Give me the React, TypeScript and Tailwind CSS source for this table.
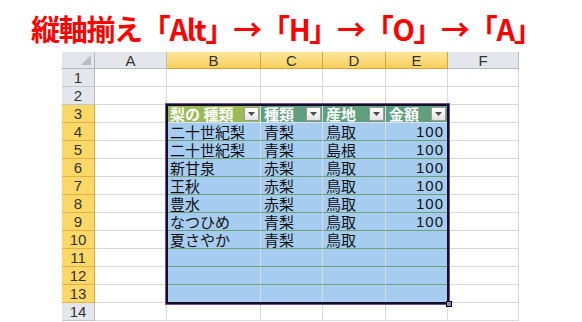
const COLS = ["A", "B", "C", "D", "E", "F"];

const HEADERS = [
  { label: "梨の 種類", bg: "bg-[#9bbb59]" },
  { label: "種類", bg: "bg-[#5f9f7e]" },
  { label: "産地", bg: "bg-[#5f9f7e]" },
  { label: "金額", bg: "bg-[#5f9f7e]" },
];

const ROWS: string[][] = [
  ["二十世紀梨", "青梨", "鳥取", "100"],
  ["二十世紀梨", "青梨", "島根", "100"],
  ["新甘泉", "赤梨", "鳥取", "100"],
  ["王秋", "赤梨", "鳥取", "100"],
  ["豊水", "赤梨", "鳥取", "100"],
  ["なつひめ", "青梨", "鳥取", "100"],
  ["夏さやか", "青梨", "鳥取", ""],
  ["", "", "", ""],
  ["", "", "", ""],
  ["", "", "", ""],
];

// rows 3..13 and columns B..E belong to the table
const inTable = (row: number, col: number) => row >= 3 && row <= 13 && col >= 1 && col <= 4;
const selectedCol = (col: number) => col >= 1 && col <= 4;
const selectedRow = (row: number) => row >= 3 && row <= 13;

function FilterButton() {
  return (
    <span className="ml-auto mr-[1px] flex h-[14px] w-[15px] shrink-0 items-center justify-center border border-[#9a9a9a] bg-gradient-to-b from-white to-[#e3e3e3]">
      <svg width="7" height="4" viewBox="0 0 7 4">
        <path d="M0 0H7L3.5 4Z" fill="#4d4d4d" />
      </svg>
    </span>
  );
}

function PearTable() {
  return (
    <div className="relative col-start-3 col-span-4 row-start-4 row-span-11">
      <div className="grid h-full grid-cols-[94px_62px_63px_62px] grid-rows-[repeat(11,18px)] font-['Noto_Sans_CJK_JP',sans-serif]">
        {HEADERS.map((h) => (
          <div
            key={h.label}
            className={`flex items-center border-b border-r border-[#d9e2ea] pl-[3px] text-[15px] font-bold leading-[17px] text-white ${h.bg}`}
          >
            <span className="whitespace-pre">{h.label}</span>
            <FilterButton />
          </div>
        ))}
        {ROWS.map((r, i) =>
          r.map((v, j) => (
            <div
              key={`${i}-${j}`}
              className={`flex items-center border-b border-r border-b-[#6c9f7b] border-r-[#d4dde8] bg-[#a6cdf0] px-[3px] text-[15px] leading-[16px] text-[#111] ${
                j === 3 ? "justify-end font-['Liberation_Sans',sans-serif] tracking-[1px]" : ""
              }`}
            >
              {v}
            </div>
          ))
        )}
      </div>
      <div className="pointer-events-none absolute -inset-px border-[2px] border-[#160d28] outline outline-1 outline-[#6a52a3]" />
      <div className="absolute -bottom-[4px] -right-[4px] h-[6px] w-[6px] bg-black p-[1px]">
        <div className="h-full w-full bg-[#7f8fb0]" />
      </div>
    </div>
  );
}

export default function App() {
  const rowNums = Array.from({ length: 14 }, (_, i) => i + 1);

  return (
    <div className="relative h-[322px] w-[582px] overflow-hidden bg-white">
      <div className="h-[52px] whitespace-nowrap pl-[31px] pt-[11px] font-['Noto_Sans_CJK_JP',sans-serif] text-[29px] font-bold leading-[34px] tracking-[-1.3px] text-[#ff0000]">
        縦軸揃え「Alt」→「H」→「O」→「A」
      </div>

      <div className="ml-[62px] grid w-max grid-cols-[33px_72px_94px_62px_63px_62px_71px] grid-rows-[17px_repeat(14,18px)] font-['Liberation_Sans',sans-serif]">
        {/* corner */}
        <div className="relative border-b border-r border-[#b4b9c1] bg-[#e3e6ea]">
          <svg className="absolute bottom-[3px] right-[3px]" width="10" height="10" viewBox="0 0 10 10">
            <path d="M10 0V10H0Z" fill="#b8bcc2" />
          </svg>
        </div>
        {COLS.map((c, ci) => (
          <div
            key={c}
            className={`flex items-center justify-center border-b border-r text-[15px] leading-none ${
              selectedCol(ci)
                ? "border-[#d7a440] bg-gradient-to-b from-[#fde59a] to-[#f7cf5a] text-[#333]"
                : "border-[#b9bec6] bg-[#e3e6ea] text-[#333]"
            }`}
          >
            {c}
          </div>
        ))}

        <PearTable />

        {rowNums.map((n) => (
          <div key={n} className="contents">
            <div
              className={`col-start-1 flex items-center justify-center border-b border-r text-[15px] leading-none text-[#333] ${
                selectedRow(n)
                  ? "border-b-[#e0b24c] border-r-[#d7a440] bg-[#fcd867]"
                  : "border-b-[#c4c9d0] border-r-[#b4b9c1] bg-[#e3e6ea]"
              }`}
            >
              {n}
            </div>
            {COLS.map((c, ci) =>
              inTable(n, ci) ? null : (
                <div key={c} className="border-b border-r border-[#d9d9d9] bg-white" />
              )
            )}
          </div>
        ))}
      </div>
    </div>
  );
}
